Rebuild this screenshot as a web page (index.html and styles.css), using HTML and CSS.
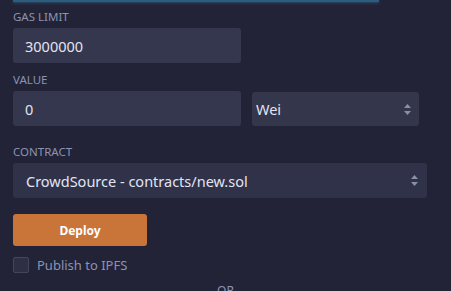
FILE: index.html
```html
<!DOCTYPE html>
<html lang="en">
<head>
    <meta charset="UTF-8">
    <meta name="viewport" content="width=device-width, initial-scale=1.0">
    <title>Deploy &amp; Run</title>
    <link rel="stylesheet" href="styles.css">
</head>
<body>
    <!-- focused field above, scrolled out -->
    <div class="focus-edge"></div>

    <div class="panel">
        <label class="label gas-label" for="gas">Gas limit</label>
        <input class="field" type="text" id="gas" value="3000000">

        <label class="label value-label" for="value">Value</label>
        <div class="row">
            <input class="field" type="text" id="value" value="0">
            <div class="select unit">
                <span>Wei</span>
                <svg class="arrows" width="7" height="11" viewBox="0 0 7 11"><path d="M3.5 0 L7 4 L0 4 Z M0 7 L7 7 L3.5 11 Z" fill="#8a8fa8"/></svg>
            </div>
        </div>

        <label class="label contract-label">Contract</label>
        <div class="select contract">
            <span>CrowdSource - contracts/new.sol</span>
            <svg class="arrows" width="7" height="11" viewBox="0 0 7 11"><path d="M3.5 0 L7 4 L0 4 Z M0 7 L7 7 L3.5 11 Z" fill="#8a8fa8"/></svg>
        </div>

        <button class="deploy">Deploy</button>

        <div class="publish">
            <span class="checkbox"></span>
            <span>Publish to IPFS</span>
        </div>

        <div class="or">OR</div>
    </div>
</body>
</html>
```

FILE: styles.css
```css
/* General Styles */
body {
    font-family: "Noto Sans", Lato, sans-serif;
    margin: 0;
    padding: 0;
    background-color: #222336;
    color: #e2e4f2;
    overflow: hidden;
}
.focus-edge {
    margin-left: 13px;
    width: 366px;
    height: 2px;
    background: #2a5d7e;
    box-shadow: 0 1px 3px rgba(56, 140, 190, 0.5);
}
.panel {
    padding: 0 13px;
    display: flex;
    flex-direction: column;
    align-items: flex-start;
}
.label {
    display: block;
    font-size: 11.5px;
    color: #8a93b3;
    text-transform: uppercase;
    line-height: 14px;
}
.gas-label {
    margin-top: 8px;
    margin-bottom: 4px;
}
.value-label {
    margin-top: 10px;
    margin-bottom: 4px;
}
.contract-label {
    margin-top: 19px;
    margin-bottom: 4px;
}
.field {
    box-sizing: border-box;
    width: 228px;
    height: 35px;
    border: none;
    border-radius: 3px;
    background: #35374f;
    color: #e2e4f2;
    font-family: inherit;
    font-size: 14.5px;
    padding: 0 12px;
    outline: none;
}
.row {
    display: flex;
    gap: 11px;
    align-items: flex-start;
}
.select {
    box-sizing: border-box;
    display: flex;
    align-items: center;
    justify-content: space-between;
    border-radius: 3px;
    font-size: 14.5px;
}
.unit {
    width: 167px;
    height: 34px;
    margin-top: 1px;
    background: #34364c;
    padding: 0 8px 0 4px;
}
.contract {
    width: 414px;
    height: 35px;
    background: #30324a;
    padding: 0 9px 0 13px;
}
.deploy {
    margin-top: 16px;
    width: 134px;
    height: 32px;
    border: none;
    border-radius: 3px;
    background: #c97539;
    color: #fff;
    font-family: inherit;
    font-size: 12px;
    font-weight: bold;
    cursor: pointer;
}
.publish {
    margin-top: 10px;
    display: flex;
    align-items: center;
    gap: 8px;
    font-size: 13px;
    color: #8a93b3;
}
.checkbox {
    box-sizing: border-box;
    width: 16px;
    height: 16px;
    border: 1px solid #44465c;
    border-radius: 2px;
    background: #2d2f44;
}
.or {
    align-self: center;
    margin-top: 10px;
    font-size: 12px;
    line-height: 14px;
    color: #8a93b3;
}
```
